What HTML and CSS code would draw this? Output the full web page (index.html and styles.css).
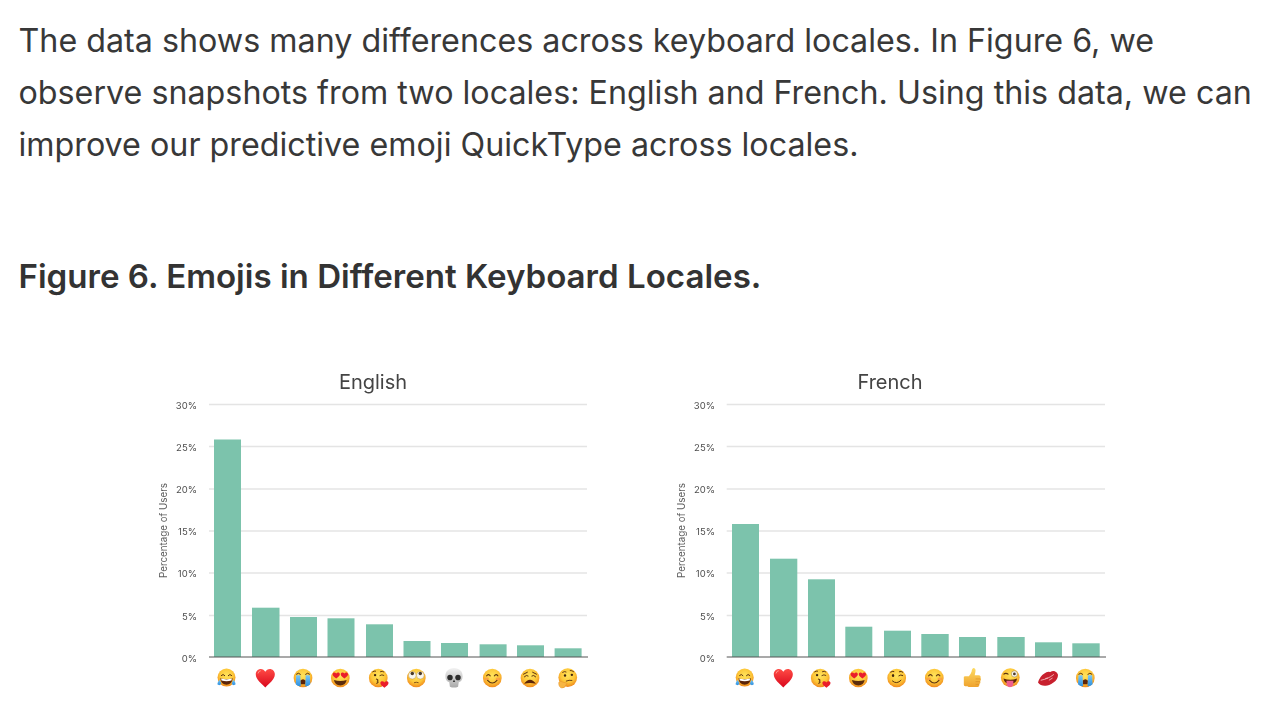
FILE: index.html
```html
<!DOCTYPE html>
<html lang="en">
<head>
<meta charset="utf-8">
<title>Emojis in Different Keyboard Locales</title>
<link rel="stylesheet" href="styles.css">
</head>
<body>
<svg class="defs" aria-hidden="true">
  <defs>
    <radialGradient id="f" cx="50%" cy="38%" r="62%">
      <stop offset="0" stop-color="#ffe45c"/><stop offset=".6" stop-color="#fdc738"/><stop offset="1" stop-color="#f0881c"/>
    </radialGradient>
    <linearGradient id="r" x1="0" y1="0" x2="0" y2="1">
      <stop offset="0" stop-color="#ff4b45"/><stop offset="1" stop-color="#d9071c"/>
    </linearGradient>
    <linearGradient id="b" x1="0" y1="0" x2="0" y2="1">
      <stop offset="0" stop-color="#7cc8f5"/><stop offset="1" stop-color="#2b8fe0"/>
    </linearGradient>
    <linearGradient id="s" x1="0" y1="0" x2="0" y2="1">
      <stop offset="0" stop-color="#f2f2f2"/><stop offset="1" stop-color="#a9a9a9"/>
    </linearGradient>
    <linearGradient id="t" x1="0" y1="0" x2="0" y2="1">
      <stop offset="0" stop-color="#fddb63"/><stop offset="1" stop-color="#efa22d"/>
    </linearGradient>
    <symbol id="e-joy" viewBox="0 0 24 24">
      <circle cx="12" cy="11.5" r="10.8" fill="url(#f)"/>
      <path d="M5.5 9.3 Q8 6.3 10.2 9.5M13.8 9.5 Q16 6.3 18.5 9.3" fill="none" stroke="#5a3210" stroke-width="1.2"/>
      <path d="M4.5 12.2 Q12 14.5 19.5 12.2 Q18.5 20 12 20 Q5.5 20 4.5 12.2Z" fill="#5c2408"/>
      <path d="M5.5 12.7 Q12 14.6 18.5 12.7 L18 15 Q12 16.8 6 15Z" fill="#fff"/>
      <path d="M3.6 14 Q6.2 18 5.5 19.6 Q3.3 21.5 1 19.6 Q.6 17.5 3.6 14ZM20.4 14 Q17.8 18 18.5 19.6 Q20.7 21.5 23 19.6 Q23.4 17.5 20.4 14Z" fill="url(#b)"/>
    </symbol>
    <symbol id="e-heart" viewBox="1 1 22 22">
      <path d="M12 22.5 C8 18.5 1.5 14 1.5 8 C1.5 4.3 4.2 2 7 2 C9.2 2 11 3.2 12 5.2 C13 3.2 14.8 2 17 2 C19.8 2 22.5 4.3 22.5 8 C22.5 14 16 18.5 12 22.5Z" fill="url(#r)"/>
      <path d="M4 7 Q4.6 4.2 7 4" fill="none" stroke="#ff9b92" stroke-width="1"/>
    </symbol>
    <symbol id="e-sob" viewBox="1 1 22 22">
      <circle cx="12" cy="12" r="10.3" fill="url(#f)"/>
      <path d="M4.5 8 Q7 5.5 9.5 8.2M14.5 8.2 Q17 5.5 19.5 8" fill="none" stroke="#5a3210" stroke-width="1.1"/>
      <path d="M9 15 Q12 11.5 15 15 L14.5 19 H9.5Z" fill="#5c2408"/>
      <path d="M4.5 9 H9 L9.5 21 Q6.5 21.5 4 19Z M15 9 H19.5 L20 19 Q17.5 21.5 14.5 21Z" fill="url(#b)"/>
    </symbol>
    <symbol id="e-hearts" viewBox="1 1 22 22">
      <circle cx="12" cy="12" r="10.3" fill="url(#f)"/>
      <path d="M5 14.3 Q12 16.5 19 14.3 Q18 20.3 12 20.3 Q6 20.3 5 14.3Z" fill="#5c2c0c"/>
      <path d="M7.5 12.5 C5.6 11 3.5 9.8 3.5 7.8 C3.5 5.8 6.3 5.2 7.5 7 C8.7 5.2 11.5 5.8 11.5 7.8 C11.5 9.8 9.4 11 7.5 12.5ZM16.5 12.5 C14.6 11 12.5 9.8 12.5 7.8 C12.5 5.8 15.3 5.2 16.5 7 C17.7 5.2 20.5 5.8 20.5 7.8 C20.5 9.8 18.4 11 16.5 12.5Z" fill="#ea1d2b"/>
    </symbol>
    <symbol id="e-kiss" viewBox="1 1 22 22">
      <circle cx="11.5" cy="12" r="10.3" fill="url(#f)"/>
      <circle cx="8" cy="8.8" r="1.3" fill="#3f2410"/>
      <path d="M5 5.5 Q7 4 9 4.5M13.5 5.2 Q16 4 18 5.5M13 9.5 Q15.5 7.7 18 9.3" fill="none" stroke="#5a3210" stroke-width="1"/>
      <path d="M9 13 Q12.2 13.8 10.6 15.4 Q12.6 16.8 9.4 18" fill="none" stroke="#5a3210" stroke-width="1.2"/>
      <path d="M18.3 22.6 C16 21 13.8 19.6 13.8 17.6 C13.8 15.4 17 15 18.3 16.9 C19.6 15 22.8 15.4 22.8 17.6 C22.8 19.6 20.6 21 18.3 22.6Z" fill="#ea1d2b"/>
    </symbol>
    <symbol id="e-roll" viewBox="1 1 22 22">
      <circle cx="12" cy="12" r="10.3" fill="url(#f)"/>
      <circle cx="7.6" cy="9" r="4.2" fill="#f8f6ee" stroke="#a87a2a" stroke-width=".4"/>
      <circle cx="16.4" cy="9" r="4.2" fill="#f8f6ee" stroke="#a87a2a" stroke-width=".4"/>
      <circle cx="7.6" cy="7.1" r="1.9" fill="#4a3a28"/>
      <circle cx="16.4" cy="7.1" r="1.9" fill="#4a3a28"/>
      <path d="M9.5 17.2 Q12 16.2 14.5 17.2" fill="none" stroke="#7a4a18" stroke-width="1"/>
    </symbol>
    <symbol id="e-skull" viewBox="1 1 22 22">
      <path d="M12 1 C5.8 1 2.5 5 2.5 10 C2.5 13.5 4 15.6 6.8 16.8 L7.5 21.5 Q12 23.5 16.5 21.5 L17.2 16.8 C20 15.6 21.5 13.5 21.5 10 C21.5 5 18.2 1 12 1Z" fill="url(#s)"/>
      <ellipse cx="7.6" cy="11.5" rx="3" ry="3.1" fill="#2c2c2c"/>
      <ellipse cx="16.4" cy="11.5" rx="3" ry="3.1" fill="#2c2c2c"/>
      <path d="M12 13.6 L13.3 16.5 H10.7Z" fill="#2c2c2c"/>
    </symbol>
    <symbol id="e-smile" viewBox="1 1 22 22">
      <circle cx="12" cy="12" r="10.3" fill="url(#f)"/>
      <ellipse cx="5.8" cy="13" rx="2.6" ry="1.6" fill="#f98a4a" opacity=".6"/>
      <ellipse cx="18.2" cy="13" rx="2.6" ry="1.6" fill="#f98a4a" opacity=".6"/>
      <path d="M5.5 10 Q7.7 6.6 10 10M14 10 Q16.3 6.6 18.5 10M6.5 14.3 Q12 20.6 17.5 14.3" fill="none" stroke="#5a3210" stroke-width="1.2"/>
    </symbol>
    <symbol id="e-weary" viewBox="1 1 22 22">
      <circle cx="12" cy="12" r="10.3" fill="url(#f)"/>
      <path d="M4.5 8 L9.5 5.5M5.5 11 Q8 8 10.3 10M19.5 8 L14.5 5.5M18.5 11 Q16 8 13.7 10" fill="none" stroke="#5a3210" stroke-width="1.1"/>
      <path d="M5.5 18.3 Q12 9.5 18.5 18.3 Q12 16.5 5.5 18.3Z" fill="#5c2408"/>
    </symbol>
    <symbol id="e-think" viewBox="1 1 22 22">
      <circle cx="12.5" cy="11.5" r="10.3" fill="url(#f)"/>
      <circle cx="9.5" cy="9.2" r="1.3" fill="#3f2410"/>
      <circle cx="17" cy="8.5" r="1.3" fill="#3f2410"/>
      <path d="M6.5 6 Q9 4.2 11 5.5M14.8 3.8 Q17 3.5 19.3 5.3M10.5 15.5 Q14 14 17.5 14.7" fill="none" stroke="#5a3210" stroke-width="1"/>
      <path d="M2.5 17 Q5 14.6 6.8 16.5 L11.5 17.5 Q12.5 18.8 10.5 19.3 Q10 23 6 23 Q2.5 22.5 2.5 17Z" fill="#f7b644" stroke="#e4902a" stroke-width=".5"/>
    </symbol>
    <symbol id="e-wink" viewBox="1 1 22 22">
      <circle cx="12" cy="12" r="10.3" fill="url(#f)"/>
      <ellipse cx="8" cy="9.2" rx="1.3" ry="1.7" fill="#3f2410"/>
      <path d="M5 5.8 Q7 4.2 9.3 5M14 9.8 Q16.5 7.8 19 9.5M14.5 5.2 Q17 4.2 19 5.8M7 15 Q12 19.5 17 14.2" fill="none" stroke="#5a3210" stroke-width="1.1"/>
    </symbol>
    <symbol id="e-thumb" viewBox="1 1 22 22">
      <path d="M3 11 Q3 10 4.5 10 H8.5 Q10.5 8 11.5 5 Q12 1 14 1 Q16.5 1.5 15.7 5.5 L15 9 H20 Q22 9.5 21.5 12 Q22.5 14 21 15.5 Q22 17.5 20 18.7 Q20.5 21.5 18 22 H10 Q8 22 7 21 H4.5 Q3 21 3 19.5Z" fill="url(#t)"/>
      <path d="M16 13 H21M16 16 H21M16 19 H20" stroke="#d98d25" stroke-width=".7" fill="none"/>
    </symbol>
    <symbol id="e-tongue" viewBox="1 1 22 22">
      <circle cx="12" cy="11.5" r="10.3" fill="url(#f)"/>
      <circle cx="16.5" cy="7.5" r="3.4" fill="#f8f6ee" stroke="#8a6a28" stroke-width=".5"/>
      <circle cx="16.5" cy="7.5" r="1.5" fill="#4a3a28"/>
      <path d="M4.5 8 Q7 5.8 10 8" fill="none" stroke="#5a3210" stroke-width="1.2"/>
      <path d="M4.5 12.6 Q12 15.2 19.5 12.6 Q18.5 18.5 12 18.5 Q5.5 18.5 4.5 12.6Z" fill="#5c2408"/>
      <path d="M7.8 15 H15.4 L15.2 20 Q11.5 24.6 8 20Z" fill="#ef5f8e"/>
    </symbol>
    <symbol id="e-lips" viewBox="1 1 22 22">
      <path d="M1 17 Q3 10 8 7 Q11 4.5 14.5 5.5 Q17 3.5 19.5 4.5 Q22.5 6 23 8.5 Q23 14 18 17 Q13 20.5 9.5 20.5 Q4 21 1 17Z" fill="#c8202e"/>
      <path d="M4 14.5 Q9 13.5 12 12 L9 12.5M12 12 Q15 10.8 18.5 8M13 14.5 L17 12" fill="none" stroke="#f6c4c4" stroke-width=".9"/>
    </symbol>
  </defs>
</svg>

<main class="article">
  <p class="lead">The data shows many differences across keyboard locales. In Figure 6, we observe snapshots from two locales: English and French. Using this data, we can improve our predictive emoji QuickType across locales.</p>
  <h2 class="figure-title">Figure 6. Emojis in Different Keyboard Locales.</h2>
  <figure class="charts">
    <svg class="chart" viewBox="140 360 500 346" role="img" aria-label="English">
      <text class="chart-title" x="373" y="388.5">English</text>
      <g class="grid">
        <line x1="209" x2="587" y1="404.5" y2="404.5"/>
        <line x1="209" x2="587" y1="446.5" y2="446.5"/>
        <line x1="209" x2="587" y1="489" y2="489"/>
        <line x1="209" x2="587" y1="531" y2="531"/>
        <line x1="209" x2="587" y1="573" y2="573"/>
        <line x1="209" x2="587" y1="615.5" y2="615.5"/>
      </g>
      <g class="tick">
        <text x="197" y="408.5">30%</text><text x="197" y="450.5">25%</text><text x="197" y="493">20%</text>
        <text x="197" y="535">15%</text><text x="197" y="577">10%</text><text x="197" y="619.5">5%</text><text x="197" y="661.5">0%</text>
      </g>
      <text class="axis-label" transform="translate(166.5 530.5) rotate(-90)">Percentage of Users</text>
      <g class="bars">
        <rect x="214" y="439.5" width="27" height="217.5"/>
        <rect x="252" y="607.7" width="27.5" height="49.3"/>
        <rect x="290" y="617" width="27" height="40"/>
        <rect x="327.5" y="618.3" width="27" height="38.7"/>
        <rect x="366" y="624.3" width="27" height="32.7"/>
        <rect x="403.5" y="641" width="27" height="16"/>
        <rect x="441" y="643" width="27" height="14"/>
        <rect x="479.6" y="644.3" width="27" height="12.7"/>
        <rect x="517" y="645.3" width="27" height="11.7"/>
        <rect x="554.6" y="648.3" width="27" height="8.7"/>
      </g>
      <line class="baseline" x1="209" x2="588" y1="657" y2="657"/>
      <use href="#e-joy" x="216.5" y="668" width="20" height="20"/>
      <use href="#e-heart" x="255.3" y="668" width="20" height="20"/>
      <use href="#e-sob" x="293" y="668" width="20" height="20"/>
      <use href="#e-hearts" x="330.3" y="668" width="20" height="20"/>
      <use href="#e-kiss" x="368.7" y="668" width="20" height="20"/>
      <use href="#e-roll" x="406.3" y="668" width="20" height="20"/>
      <use href="#e-skull" x="444" y="668" width="20" height="20"/>
      <use href="#e-smile" x="482.3" y="668" width="20" height="20"/>
      <use href="#e-weary" x="520" y="668" width="20" height="20"/>
      <use href="#e-think" x="557.3" y="668" width="20" height="20"/>
    </svg>
    <svg class="chart" viewBox="658 360 500 346" role="img" aria-label="French">
      <text class="chart-title" x="890" y="388.5">French</text>
      <g class="grid">
        <line x1="726.7" x2="1105" y1="404.5" y2="404.5"/>
        <line x1="726.7" x2="1105" y1="446.5" y2="446.5"/>
        <line x1="726.7" x2="1105" y1="489" y2="489"/>
        <line x1="726.7" x2="1105" y1="531" y2="531"/>
        <line x1="726.7" x2="1105" y1="573" y2="573"/>
        <line x1="726.7" x2="1105" y1="615.5" y2="615.5"/>
      </g>
      <g class="tick">
        <text x="715" y="408.5">30%</text><text x="715" y="450.5">25%</text><text x="715" y="493">20%</text>
        <text x="715" y="535">15%</text><text x="715" y="577">10%</text><text x="715" y="619.5">5%</text><text x="715" y="661.5">0%</text>
      </g>
      <text class="axis-label" transform="translate(684.5 530.5) rotate(-90)">Percentage of Users</text>
      <g class="bars">
        <rect x="732" y="524" width="27" height="133"/>
        <rect x="770" y="558.7" width="27.3" height="98.3"/>
        <rect x="808" y="579.3" width="27" height="77.7"/>
        <rect x="845.3" y="626.7" width="27" height="30.3"/>
        <rect x="884" y="630.7" width="27" height="26.3"/>
        <rect x="921.3" y="634" width="27.4" height="23"/>
        <rect x="959" y="637" width="27" height="20"/>
        <rect x="997.3" y="637" width="27.4" height="20"/>
        <rect x="1035" y="642.3" width="27" height="14.7"/>
        <rect x="1072.3" y="643.3" width="27.4" height="13.7"/>
      </g>
      <line class="baseline" x1="726.7" x2="1106" y1="657" y2="657"/>
      <use href="#e-joy" x="734.7" y="668" width="20" height="20"/>
      <use href="#e-heart" x="773.3" y="668" width="20" height="20"/>
      <use href="#e-kiss" x="810.7" y="668" width="20" height="20"/>
      <use href="#e-hearts" x="848.3" y="668" width="20" height="20"/>
      <use href="#e-wink" x="886.7" y="668" width="20" height="20"/>
      <use href="#e-smile" x="924.3" y="668" width="20" height="20"/>
      <use href="#e-thumb" x="962" y="668" width="20" height="20"/>
      <use href="#e-tongue" x="1000.3" y="668" width="20" height="20"/>
      <use href="#e-lips" x="1038" y="668" width="20" height="20"/>
      <use href="#e-sob" x="1075.3" y="668" width="20" height="20"/>
    </svg>
  </figure>
</main>
</body>
</html>
```
FILE: styles.css
```css
* { box-sizing: border-box; }
html, body { margin: 0; background: #fff; }
body {
  height: 706px;
  overflow: hidden;
  font-family: Inter, "Liberation Sans", sans-serif;
  color: #333;
}
.defs { position: absolute; width: 0; height: 0; }
symbol { overflow: visible; }
.article { padding: 15px 0 0 18.5px; }
.lead {
  margin: 0;
  width: 1250px;
  font-size: 32.25px;
  line-height: 52px;
  color: #383838;
}
.figure-title {
  margin: 79px 0 0;
  font-size: 33.1px;
  line-height: 52px;
  font-weight: 600;
}
.charts {
  display: flex;
  gap: 18px;
  margin: 58px 0 0;
  padding-left: 121.5px;
}
.chart {
  flex: none;
  display: block;
  width: 500px;
  height: 346px;
  filter: blur(0.45px);
}
.chart-title { font-size: 20px; fill: #444; text-anchor: middle; }
.grid line { stroke: #e4e4e4; stroke-width: 1.4; }
.tick text { font-size: 9.5px; fill: #4d4d4d; text-anchor: end; }
.axis-label { font-size: 9.8px; fill: #5c5c5c; text-anchor: middle; }
.bars rect { fill: #7cc3ac; }
.baseline { stroke: #555; stroke-width: 1.1; }
```
